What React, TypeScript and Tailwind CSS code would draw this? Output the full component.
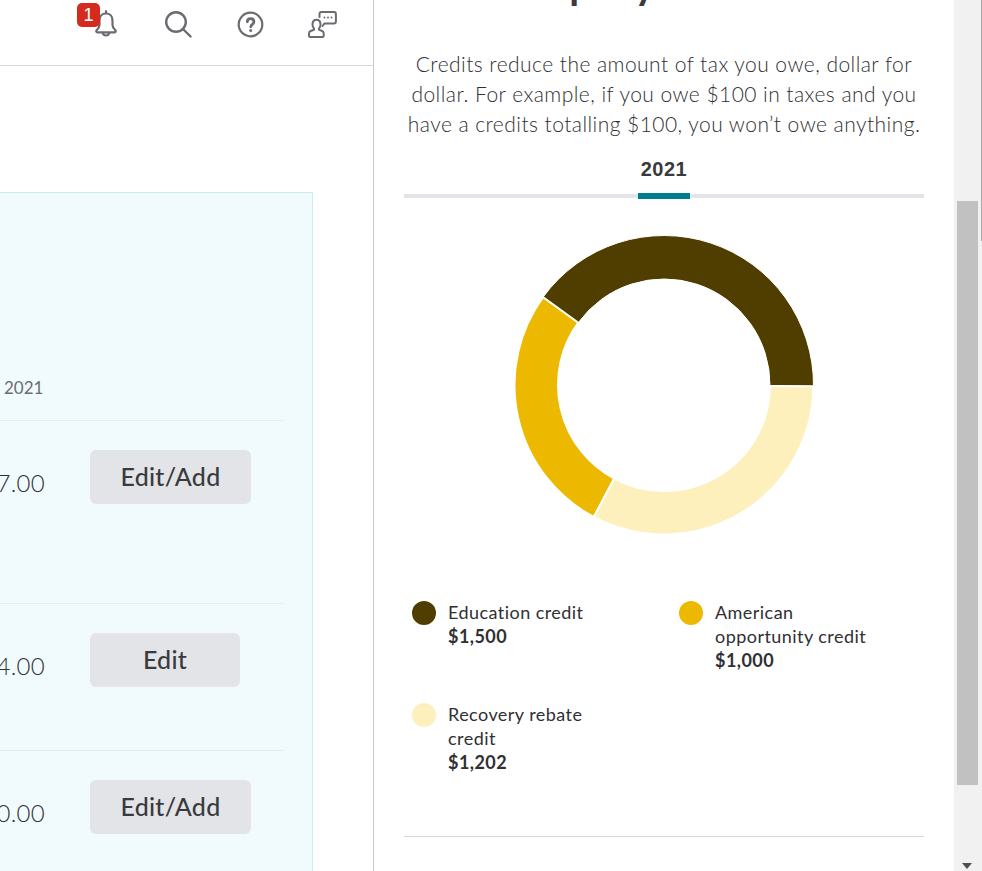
import React from "react";

const FONT = "font-['Lato','Noto_Sans',sans-serif]";

function polar(r: number, deg: number) {
  const a = (deg * Math.PI) / 180;
  return [150 + r * Math.cos(a), 150 - r * Math.sin(a)];
}
function seg(from: number, to: number) {
  const R = 149.5, r = 106;
  const [a, b] = polar(R, from), [c, d] = polar(R, to), [e, f] = polar(r, to), [g, h] = polar(r, from);
  const large = to - from > 180 ? 1 : 0;
  return `M${a} ${b}A${R} ${R} 0 ${large} 0 ${c} ${d}L${e} ${f}A${r} ${r} 0 ${large} 1 ${g} ${h}Z`;
}

function Donut() {
  return (
    <svg width="300" height="300" viewBox="0 0 300 300">
      <path d={seg(-0.5, 144)} fill="#4f3e00" stroke="#fff" strokeWidth="1" />
      <path d={seg(144, 242)} fill="#ecb900" stroke="#fff" strokeWidth="2" />
      <path d={seg(242, 359.5)} fill="#fdf0bd" stroke="#fff" strokeWidth="2" />
    </svg>
  );
}

function Row({ amount, label, h, btnW }: { amount: string; label: string; h: string; btnW: string }) {
  return (
    <div className={`flex w-[283px] items-start border-b border-[#e3eef1] pt-[29px] ${h}`}>
      <div className="mt-[17px] flex h-[32px] w-[45px] justify-end overflow-hidden whitespace-nowrap text-[24px] font-light leading-[32px] tracking-[0.3px] text-[#2f3033]">
        {amount}
      </div>
      <button className={`ml-[45px] h-[54px] rounded-[6px] bg-[#e3e4e8] text-[25px] font-medium tracking-[0.25px] text-[#393a3d] ${btnW}`}>
        {label}
      </button>
    </div>
  );
}

function Legend({ color, label, value, w }: { color: string; label: React.ReactNode; value: string; w: string }) {
  return (
    <div className={`flex gap-3 ${w}`}>
      <span className={`mt-[1px] h-6 w-6 shrink-0 rounded-full ${color}`} />
      <div className="text-[18px] leading-6 tracking-[0.45px] text-[#2f3033]">
        <div>{label}</div>
        <div className="font-bold">{value}</div>
      </div>
    </div>
  );
}

const ICON = "#6b6c72";

export default function App() {
  return (
    <div className={`flex h-[871px] w-[982px] overflow-hidden bg-white ${FONT}`}>
      {/* Left */}
      <div className="h-full w-[374px] shrink-0 overflow-hidden border-r border-[#c9c9c9]">
        <header className="relative flex h-[66px] items-start border-b border-[#d4d7dc] pl-[93px] pt-[9px]">
          <span className="absolute left-[77px] top-[3px] flex h-6 w-[23px] items-center justify-center rounded-[5px] bg-[#d52b1e] font-['Liberation_Sans',sans-serif] text-[18px] leading-6 text-white">
            1
          </span>
          <svg width="26" height="30" viewBox="0 0 26 30" fill="none" stroke={ICON} strokeWidth="2.2" strokeLinecap="round" strokeLinejoin="round">
            <path d="M13 2v2.5M13 4.5c-4.2 0-6.5 3-6.5 7v4.5c0 2.5-1.5 4-3 5.500-.6.7-.2 1.800.8 1.800h17.400c1 0 1.400-1.100.8-1.800-1.500-1.500-3-3-3-5.500v-4.500c0-4-2.300-7-6.500-7z" />
            <path d="M9.800 24a3.300 3.300 0 0 0 6.400 0" />
          </svg>
          <svg className="ml-[45px] mt-[1px]" width="28" height="28" viewBox="0 0 28 28" fill="none" stroke={ICON} strokeWidth="2.4" strokeLinecap="round">
            <circle cx="12" cy="12" r="9.800" />
            <path d="M19 19l7.500 7.500" />
          </svg>
          <svg className="ml-[45px] mt-[2px]" width="27" height="27" viewBox="0 0 27 27" fill="none" stroke={ICON} strokeWidth="2.200" strokeLinecap="round" strokeLinejoin="round">
            <circle cx="13.500" cy="13.500" r="11.800" />
            <path d="M10.300 10.800c0-4.300 6.600-4.300 6.600 0 0 2.600-3.100 2.500-3.100 5" strokeWidth="2.800" />
            <circle cx="13.700" cy="19.500" r="1.500" fill={ICON} stroke="none" />
          </svg>
          <svg className="ml-[44px] mt-[2px]" width="30" height="27" viewBox="0 0 30 27" fill="none" stroke={ICON} strokeWidth="2" strokeLinecap="round" strokeLinejoin="round">
            <path d="M11.500 6V3c0-1.100.8-1.900 1.900-1.900H26c1.100 0 1.900.8 1.900 1.900v7.500c0 1.100-.8 1.900-1.900 1.900h-9.500L14.500 15" />
            <path d="M4.500 13.500c0-3 1.400-4.800 4-4.800s4 1.800 4 4.800c0 1.800-.6 3.100-1.500 3.900v1.300l3 1.300c1.100.5 1.700 1.300 1.700 2.400v2.700a.8.8 0 0 1-.8.8H1.800a.8.8 0 0 1-.8-.8v-2.700c0-1.100.6-1.900 1.700-2.400l3.300-1.300v-1.300c-.9-.8-1.500-2.100-1.500-3.900z" />
            <circle cx="16.500" cy="6.500" r="1" fill={ICON} stroke="none" />
            <circle cx="20" cy="6.500" r="1" fill={ICON} stroke="none" />
            <circle cx="23.500" cy="6.500" r="1" fill={ICON} stroke="none" />
          </svg>
        </header>
        <div className="mt-[126px] h-[680px] w-[313px] border-r border-t border-[#c8eef3] bg-[#f1fbfd] pt-[183px]">
          <div className="h-[45px] border-b border-[#e3eef1] w-[283px] pl-1 text-[17px] leading-[24px] text-[#6b6c72]">
            2021
          </div>
          <Row amount="7.00" label="Edit/Add" h="h-[183px]" btnW="w-[161px]" />
          <Row amount="4.00" label="Edit" h="h-[147px]" btnW="w-[150px]" />
          <Row amount="0.00" label="Edit/Add" h="h-[147px] border-b-0" btnW="w-[161px]" />
        </div>
      </div>

      {/* Right */}
      <main className="h-full w-[580px] shrink-0 overflow-hidden px-[30px]">
        <h2 className="mt-[-36px] h-[44px] overflow-hidden whitespace-nowrap pl-[16px] text-center text-[40px] font-bold leading-[40px] text-[#393a3d]">
          company tax credits
        </h2>
        <p className="mt-[41px] whitespace-nowrap text-center text-[21px] font-light leading-[30px] tracking-[0.45px] text-[#2f3033]">
          Credits reduce the amount of tax you owe, dollar for
          <br />
          dollar. For example, if you owe $100 in taxes and you
          <br />
          have a credits totalling $100, you won’t owe anything.
        </p>
        <div className="mt-[14px] flex h-[45px] flex-col items-center border-b-[4px] border-[#e3e4e8]">
          <span className="mt-[3px] font-['Liberation_Sans',sans-serif] text-[20px] font-bold leading-[26px] tracking-[0.5px] text-[#393a3d]">
            2021
          </span>
          <span className="mt-[11px] h-[6px] w-[52px] shrink-0 bg-[#007d8f]" />
        </div>
        <div className="mt-[37px] flex justify-center">
          <Donut />
        </div>
        <div className="mt-[65px] flex pl-2">
          <Legend color="bg-[#4f3e00]" label="Education credit" value="$1,500" w="w-[267px]" />
          <Legend color="bg-[#ecb900]" label={<>American<br />opportunity credit</>} value="$1,000" w="w-[220px]" />
        </div>
        <div className="mt-[30px] pl-2">
          <Legend color="bg-[#fdf0bd]" label={<>Recovery rebate<br />credit</>} value="$1,202" w="w-[267px]" />
        </div>
        <div className="mt-[62px] border-t border-[#d4d7dc]" />
      </main>

      {/* Scrollbar */}
      <div className="flex h-full w-[27px] shrink-0 flex-col items-center bg-[#f1f1f1] pt-[201px] pr-[1px]">
        <div className="h-[584px] w-[21px] bg-[#c1c1c1]" />
        <svg className="mt-[78px]" width="12" height="8" viewBox="0 0 12 8">
          <path d="M1 0h10L6 6z" fill="#505050" />
        </svg>
      </div>
      <div className="h-full w-px shrink-0 bg-[#f1f1f1]">
        <div className="h-[241px] bg-[#a8a8a8]" />
      </div>
    </div>
  );
}
